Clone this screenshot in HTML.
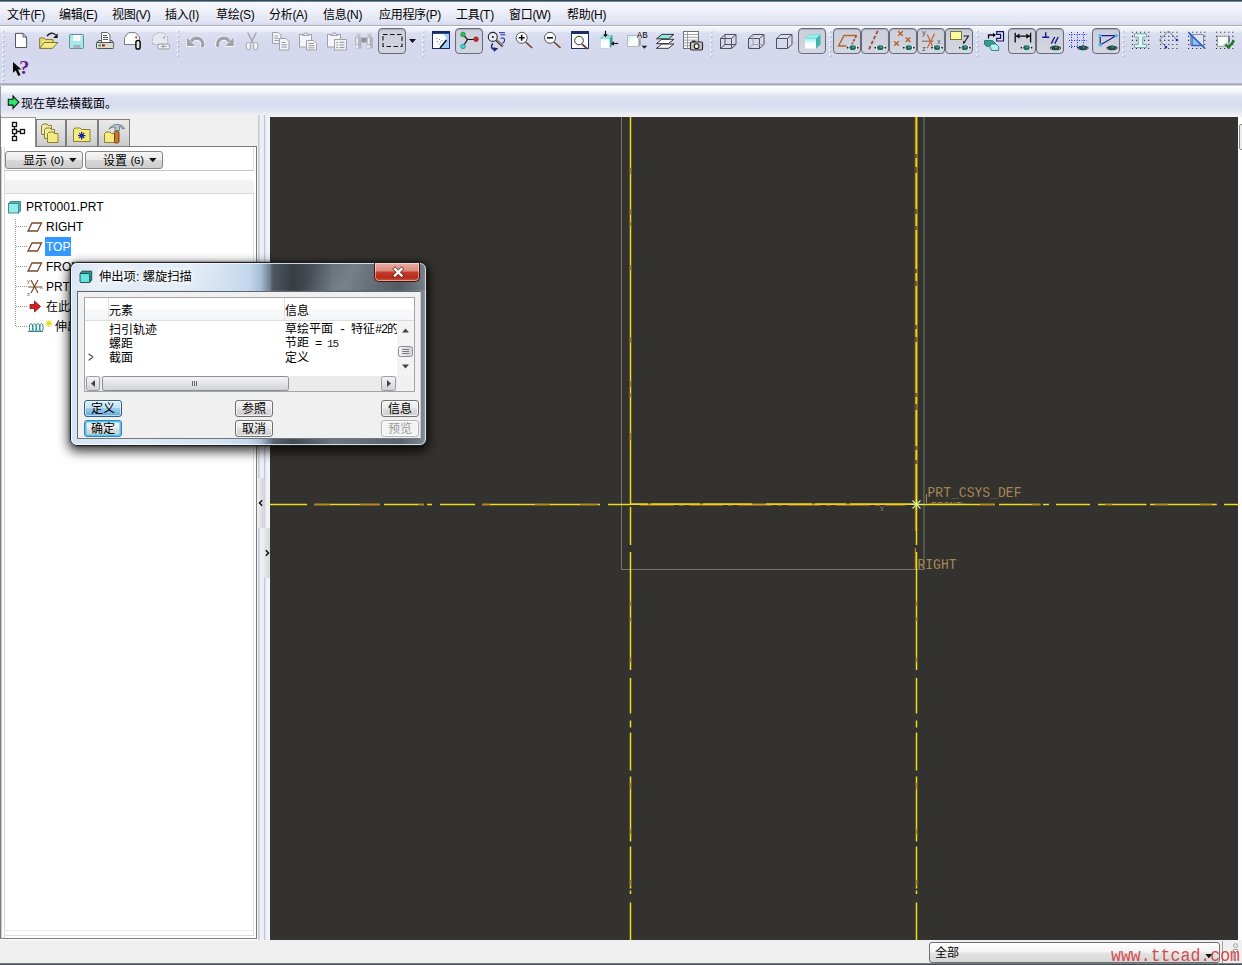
<!DOCTYPE html>
<html lang="zh-CN">
<head>
<meta charset="utf-8">
<title>Pro/ENGINEER</title>
<style>
html,body{margin:0;padding:0;}
body{width:1242px;height:965px;position:relative;overflow:hidden;background:#f0f0f0;
 font-family:"Liberation Sans","Noto Sans CJK SC",sans-serif;font-size:12px;color:#000;}
.abs{position:absolute;}
svg{position:absolute;overflow:visible;}
#topline{left:0;top:0;width:1242px;height:2px;background:linear-gradient(#2b4c5e 0,#2b4c5e 50%,#b9c6d2 100%);}
#menubar{left:0;top:2px;width:1242px;height:23px;background:linear-gradient(#f7f8fd 0%,#eef0f9 40%,#e0e3f2 85%,#d6d9ea 100%);}
#menubar span{position:absolute;top:4.700px;font-size:12px;line-height:16px;white-space:nowrap;letter-spacing:-.3px;}
#menusep{left:0;top:25px;width:1242px;height:2px;background:linear-gradient(#aeb1bd 0,#aeb1bd 50%,#fbfbfe 50%,#fbfbfe 100%);}
#toolbar{left:0;top:27px;width:1242px;height:57px;background:linear-gradient(#f4f5fb 0%,#eaecf7 7%,#dcdff1 11%,#d6d9ee 30%,#d4d8ed 60%,#d9dcef 100%);}
#tbline{left:0;top:83px;width:1242px;height:3px;background:linear-gradient(#c4c7d6 0%,#a1a5b5 40%,#a6aab9 60%,#f0f1f8 100%);}
#msgarea{left:0;top:86px;width:1242px;height:29px;background:linear-gradient(#fdfdff 0%,#f5f6fc 20%,#e3e6f4 30%,#dadef0 45%,#d8dcef 65%,#e0e3f3 85%,#eaecf5 95%,#f0f0f0 100%);}
#msgarea span{position:absolute;left:21px;top:9.500px;font-size:12px;line-height:16px;white-space:nowrap;}
#left{left:0;top:117px;width:258px;height:823px;background:#f0f0f0;}
#split{left:257px;top:115px;width:13px;height:825px;background:linear-gradient(90deg,#f0f0f0 0,#f0f0f0 1px,#c9cdd6 1.500px,#c9cdd6 2.300px,#eff2f7 3px,#e9edf4 6.500px,#bfc7d2 7px,#bfc7d2 8px,#ecf0f6 8.700px,#f2f5f9 13px);}
#canvas{left:270px;top:117px;width:968px;height:823px;background:#33322e;overflow:hidden;}
#rightedge{left:1238px;top:117px;width:4px;height:823px;background:#fdfdfd;}
#status{left:0;top:940px;width:1242px;height:23px;background:#f0f0f0;}
#botline{left:0;top:963px;width:1242px;height:2px;background:linear-gradient(#8a949c,#2e3a44);}
/* toolbar pressed buttons */
.tbtn{position:absolute;top:28px;height:24px;width:26px;border:1px solid #686b79;border-radius:4px;background:linear-gradient(#cdd0db,#d0d3de 60%,#d4d7e1);box-shadow:inset 0 1px 1px rgba(90,95,115,.3);}
/* left panel */
.tab{position:absolute;top:119px;height:27px;border:1px solid #7e7e7e;border-bottom:none;background:linear-gradient(#eaeaea,#dcdcdc 50%,#cbcbcb);box-sizing:border-box;}
.pbtn{position:absolute;top:151px;height:18px;box-sizing:border-box;border:1px solid #868686;border-radius:3px;background:linear-gradient(#f6f6f6 0%,#e9e9e9 48%,#d8d8d8 52%,#cdcdcd 100%);font-size:12px;line-height:16px;white-space:nowrap;}
.tree{position:absolute;font-size:12px;line-height:16px;white-space:nowrap;}
/* dialog */
.dbtn{position:absolute;box-sizing:border-box;width:37px;height:17px;border:1px solid #707070;border-radius:3px;background:linear-gradient(#f4f4f4 0%,#ebebeb 48%,#dddddd 52%,#cfcfcf 100%);font-size:12px;line-height:16px;text-align:center;white-space:nowrap;box-shadow:inset 0 0 0 1px rgba(255,255,255,.7);}
.dbtn.hot{border-color:#3c7fb1;background:linear-gradient(#eaf6fd 0%,#d9f0fc 48%,#bee6fd 52%,#a7d9f5 100%);box-shadow:inset 0 0 0 1px #48d8fb88;}
.dbtn.dis{color:#9a9a9a;border-color:#b5b5b5;background:#f4f4f4;}
.lt{position:absolute;font-size:12px;line-height:14px;white-space:nowrap;}
</style>
</head>
<body>
<div id="topline" class="abs"></div>
<div id="menubar" class="abs">
<span style="left:7px">文件(F)</span>
<span style="left:59px">编辑(E)</span>
<span style="left:112px">视图(V)</span>
<span style="left:165px">插入(I)</span>
<span style="left:216px">草绘(S)</span>
<span style="left:269px">分析(A)</span>
<span style="left:323px">信息(N)</span>
<span style="left:379px">应用程序(P)</span>
<span style="left:456px">工具(T)</span>
<span style="left:509px">窗口(W)</span>
<span style="left:567px">帮助(H)</span>
</div>
<div id="menusep" class="abs"></div>
<div id="toolbar" class="abs"></div>
<div id="tbline" class="abs"></div>
<div id="msgarea" class="abs"><span>现在草绘横截面。</span></div>
<div id="left" class="abs"></div>
<div id="split" class="abs"></div>
<div id="canvas" class="abs"></div>
<div id="rightedge" class="abs"></div>
<div id="status" class="abs"></div>
<div id="botline" class="abs"></div>
<!-- pressed toolbar buttons -->
<div class="tbtn" style="left:378px"></div>
<div class="tbtn" style="left:455px"></div>
<div class="tbtn" style="left:798px"></div>
<div class="tbtn" style="left:833.2px;width:25.400px"></div>
<div class="tbtn" style="left:861.2px;width:25.400px"></div>
<div class="tbtn" style="left:889.2px;width:25.400px"></div>
<div class="tbtn" style="left:917.2px;width:25.400px"></div>
<div class="tbtn" style="left:945.2px;width:25.400px"></div>
<div class="tbtn" style="left:1008.2px;width:25.400px"></div>
<div class="tbtn" style="left:1036.2px;width:25.400px"></div>
<div class="tbtn" style="left:1092px"></div>
<svg id="tbicons" style="left:0;top:0" width="1242" height="117" viewBox="0 0 1242 117">
<defs>
 <g id="eye"><ellipse cx="0" cy="0" rx="5.400" ry="1.900" fill="#fff"/><circle cx="-5" cy="0" r=".9" fill="#111"/><circle cx="5" cy="0" r=".9" fill="#111"/><ellipse cx="0" cy="0" rx="3.300" ry="2.400" fill="#1f6a60"/><ellipse cx=".6" cy="-.5" rx="1.300" ry=".9" fill="#4a9a8c"/></g>
 <g id="eyed"><ellipse cx="0" cy="0" rx="5.600" ry="2.100" fill="#111"/><circle cx="-4" cy=".2" r=".7" fill="#fff"/><circle cx="4" cy=".2" r=".7" fill="#fff"/><ellipse cx="0" cy="0" rx="3.300" ry="2.400" fill="#1c4f48"/><ellipse cx=".6" cy="-.5" rx="1.300" ry=".9" fill="#3a8a7c"/></g>
 <g id="sep"><rect x="0" y="1.0" width="1.6" height="1.6" fill="#fff"/><rect x="1.2" y="2.2" width="1.3" height="1.3" fill="#a4a8bc"/><rect x="0" y="5.8" width="1.6" height="1.6" fill="#fff"/><rect x="1.2" y="7.0" width="1.3" height="1.3" fill="#a4a8bc"/><rect x="0" y="10.7" width="1.6" height="1.6" fill="#fff"/><rect x="1.2" y="11.9" width="1.3" height="1.3" fill="#a4a8bc"/><rect x="0" y="15.5" width="1.6" height="1.6" fill="#fff"/><rect x="1.2" y="16.8" width="1.3" height="1.3" fill="#a4a8bc"/><rect x="0" y="20.4" width="1.6" height="1.6" fill="#fff"/><rect x="1.2" y="21.6" width="1.3" height="1.3" fill="#a4a8bc"/><rect x="0" y="25.2" width="1.6" height="1.6" fill="#fff"/><rect x="1.2" y="26.4" width="1.3" height="1.3" fill="#a4a8bc"/></g>
 <linearGradient id="cubeg2" x1="0" y1="0" x2="0" y2="1"><stop offset="0" stop-color="#e8fbfa"/><stop offset=".5" stop-color="#fff"/></linearGradient><linearGradient id="cubeg3" x1="0" y1="0" x2="1" y2="1"><stop offset="0" stop-color="#bff3ef"/><stop offset=".5" stop-color="#fbfdfd"/></linearGradient>
 <linearGradient id="chk" x1="0" y1="0" x2="1" y2="1"><stop offset="0" stop-color="#fff"/><stop offset=".6" stop-color="#f4f8f6"/><stop offset="1" stop-color="#a8c4bc"/></linearGradient>
 <linearGradient id="cubeg" x1="0" y1="0" x2="0" y2="1"><stop offset="0" stop-color="#9ff0ec"/><stop offset=".6" stop-color="#fff"/></linearGradient>
</defs>
<!-- grips / separators -->
<rect x="2" y="30.0" width="1.6" height="1.6" fill="#fff"/><rect x="3.2" y="31.2" width="1.3" height="1.3" fill="#a4a8bc"/><rect x="2" y="34.9" width="1.6" height="1.6" fill="#fff"/><rect x="3.2" y="36.1" width="1.3" height="1.3" fill="#a4a8bc"/><rect x="2" y="39.7" width="1.6" height="1.6" fill="#fff"/><rect x="3.2" y="40.9" width="1.3" height="1.3" fill="#a4a8bc"/><rect x="2" y="44.5" width="1.6" height="1.6" fill="#fff"/><rect x="3.2" y="45.8" width="1.3" height="1.3" fill="#a4a8bc"/><rect x="2" y="49.4" width="1.6" height="1.6" fill="#fff"/><rect x="3.2" y="50.6" width="1.3" height="1.3" fill="#a4a8bc"/><rect x="2" y="54.2" width="1.6" height="1.6" fill="#fff"/><rect x="3.2" y="55.5" width="1.3" height="1.3" fill="#a4a8bc"/><rect x="2" y="59.1" width="1.6" height="1.6" fill="#fff"/><rect x="3.2" y="60.3" width="1.3" height="1.3" fill="#a4a8bc"/><rect x="2" y="63.9" width="1.6" height="1.6" fill="#fff"/><rect x="3.2" y="65.1" width="1.3" height="1.3" fill="#a4a8bc"/><rect x="2" y="68.8" width="1.6" height="1.6" fill="#fff"/><rect x="3.2" y="70.0" width="1.3" height="1.3" fill="#a4a8bc"/><rect x="2" y="73.7" width="1.6" height="1.6" fill="#fff"/><rect x="3.2" y="74.9" width="1.3" height="1.3" fill="#a4a8bc"/><rect x="2" y="78.5" width="1.6" height="1.6" fill="#fff"/><rect x="3.2" y="79.7" width="1.3" height="1.3" fill="#a4a8bc"/>
<use href="#sep" x="176.7" y="29"/><use href="#sep" x="422" y="29"/><use href="#sep" x="710" y="29"/>
<use href="#sep" x="829" y="29"/><use href="#sep" x="976" y="29"/><use href="#sep" x="1122" y="29"/>
<!-- new -->
<path d="M15.500 33.400h7.500l3.600 3.600v10.500h-11.100z" fill="#fff" stroke="#55565e"/><path d="M23 33.400v3.600h3.600" fill="none" stroke="#55565e"/>
<!-- open -->
<path d="M39.700 48.300v-10.300h4.300l1.400 1.600h7.600v2.700" fill="#f1e06e" stroke="#7d7438"/>
<path d="M39.700 48.400l4.400-5.900h13.800l-5.400 5.900z" fill="#f6e884" stroke="#7d7438"/>
<path d="M47 36q4-5 8.500-1.200" fill="none" stroke="#111" stroke-width="1.400"/><path d="M57.600 33.300v4.600h-4.400z" fill="#111"/>
<!-- save -->
<rect x="69.500" y="34.500" width="14" height="14" rx="1.200" fill="#a4e9ec" stroke="#5b8f9c"/>
<rect x="73.200" y="35" width="7.300" height="6" fill="#fdf6f6"/><rect x="73.500" y="45" width="7" height="3.200" fill="#a9b4ba"/>
<!-- print -->
<path d="M101.500 42.500v-10h6l2.500 2.500v7.500z" fill="#fff" stroke="#666"/><path d="M103 35.500h4M103 37.500h5M103 39.500h5" stroke="#444" stroke-width=".9"/>
<path d="M96.500 43l2-2.500h2.500M110 40.500h2l1.500 2.500" fill="none" stroke="#555"/>
<rect x="96.500" y="42.500" width="17" height="6" rx=".8" fill="#dedbd0" stroke="#50525a"/><path d="M113.500 43v5.500" stroke="#7a7c80" stroke-width="1.200"/>
<rect x="98.500" y="44.300" width="2.500" height="2.200" fill="#3aa845"/><rect x="102" y="44.300" width="2.800" height="2.200" fill="#a81818"/>
<!-- mail w clip -->
<path d="M124.500 44.500v-7l4-4.800h7l4 4.300v7.500z" fill="#fff" stroke="#777980"/><rect x="135.300" y="36.500" width="1.800" height="1.800" fill="#b03030"/>
<rect x="135.900" y="40.500" width="4.200" height="8.600" rx="2.100" fill="#fff" stroke="#0a0a0a" stroke-width="1.500"/><path d="M138 43v4" stroke="#bbb" stroke-width=".8"/>
<!-- mail grey -->
<path d="M152.500 44.500v-7l4-4.800h7l4 4.300v7.500z" fill="#e6e8f2" stroke="#b2b4be" stroke-dasharray="2.500 1"/><rect x="163.300" y="36.500" width="1.800" height="1.800" fill="#9a9ca8"/>
<rect x="158" y="44" width="6.500" height="5" rx="2.300" fill="#fdfdfd" stroke="#b0b2ba" stroke-width="1.300"/><rect x="163" y="44" width="6.500" height="5" rx="2.300" fill="#fdfdfd" stroke="#b0b2ba" stroke-width="1.300"/><path d="M160.500 46.500h6.500" stroke="#a4a6ae" stroke-width="1.400"/>
<!-- undo/redo -->
<g id="redo"><path d="M218.300 47.200A5.600 5.600 0 1 1 229.300 41.500" fill="none" stroke="#fff" stroke-width="4.600"/><path d="M224.500 46.700h9.800v-9.500z" fill="#fff"/><path d="M218.300 47A5.600 5.600 0 1 1 229.300 41.500" fill="none" stroke="#9fa0a8" stroke-width="3.300"/><path d="M225.500 46h8.200v-8.200z" fill="#9fa0a8"/></g>
<use href="#redo" transform="translate(420.500 0) scale(-1 1)"/>
<!-- scissors -->
<path d="M247.700 32.500l5.300 10.500M256.300 32.500l-5.300 10.500" stroke="#a3a4ab" stroke-width="1.400"/><rect x="246.300" y="42.500" width="4" height="7.300" rx="1.800" fill="#f2f3f8" stroke="#a3a4ab"/><rect x="253.700" y="42.500" width="4" height="7.300" rx="1.800" fill="#f2f3f8" stroke="#a3a4ab"/>
<!-- copy -->
<g fill="#f4f4f9" stroke="#a0a1a9"><path d="M272.500 32.500h6l2.500 2.500v8.500h-8.500z"/><path d="M279.500 38.500h6.500l3 3v8.500h-9.500z"/></g>
<path d="M274.300 36h3.500M274.300 38.300h4.500M274.300 40.600h4.500M281.500 42.500h4M281.500 44.800h5.500M281.500 47.100h5.500" stroke="#8d8e96" stroke-width=".9"/>
<!-- paste -->
<g fill="#f4f4f9" stroke="#a0a1a9"><rect x="299.500" y="34.500" width="12" height="12.500"/><path d="M302.500 35.500q3.300-5.500 6.600 0z" fill="#e4e5ec"/><path d="M306.500 40.500h7l3 3v6.500h-10z"/></g>
<path d="M308.500 43.500h5.500M308.500 45.700h6M308.500 47.900h6" stroke="#8d8e96" stroke-width=".9"/>
<!-- paste special -->
<g fill="#f4f4f9" stroke="#a0a1a9"><rect x="327.500" y="34.500" width="13" height="12.500"/><path d="M331 35.500q3.300-5.500 6.600 0z" fill="#e4e5ec"/><rect x="334.500" y="39.500" width="12" height="10.500"/></g>
<path d="M336.300 42.300h1.800M339.500 42.300h5M336.300 45h1.800M339.500 45h5M336.300 47.600h1.800M339.500 47.600h5" stroke="#8d8e96" stroke-width="1"/>
<!-- binoculars -->
<g stroke="none"><rect x="355" y="37" width="6.500" height="11.500" fill="#b4b5bd"/><rect x="366.500" y="37" width="6.500" height="11.500" fill="#b4b5bd"/><rect x="356.500" y="33.500" width="4" height="4" fill="#c4c5cc"/><rect x="367.500" y="33.500" width="4" height="4" fill="#c4c5cc"/><rect x="361.500" y="37.500" width="5" height="5" fill="#8f9098"/>
<rect x="356.300" y="38" width="1.600" height="6" fill="#f4f5fa"/><rect x="367.800" y="38" width="1.600" height="6" fill="#f4f5fa"/><rect x="355.500" y="45" width="2.800" height="3" fill="#e9eaf0"/><rect x="367" y="45" width="2.800" height="3" fill="#e9eaf0"/><rect x="362.500" y="35" width="3" height="2.500" fill="#d8d9e0"/></g>
<!-- select -->
<rect x="383" y="34.500" width="19" height="12" fill="none" stroke="#111" stroke-width="1.100" stroke-dasharray="4.500 2.500"/>
<path d="M409 39h7l-3.500 4z" fill="#111"/>
<!-- sketch orient -->
<rect x="432.500" y="31.500" width="17" height="17" fill="#a6cef4" stroke="#16296a"/><rect x="432" y="31" width="18" height="2.800" fill="#16296a"/>
<path d="M433 34h10.500l3 4.500l-6.500 9.500h-7z" fill="#fff"/><path d="M436.500 38.500h1M439 39.500h1M437 41.500h1M440 42h1M438.500 44h1M441.500 40.500h1" stroke="#4a7fd0" stroke-width="1"/><path d="M446.500 40l-6.500 8" stroke="#0a1030" stroke-width="1.500"/>
<!-- nodes -->
<path d="M463 34.500l4.500 5l-4.500 7M467.500 39.500h8" fill="none" stroke="#111" stroke-width="1.200"/>
<circle cx="463" cy="34.500" r="2.300" fill="#2ec23a" stroke="#185" stroke-width=".7"/><circle cx="463" cy="46.500" r="2.300" fill="#39d3dc" stroke="#188" stroke-width=".7"/><circle cx="476" cy="39.200" r="2.300" fill="#d2222a" stroke="#811" stroke-width=".7"/>
<!-- repaint -->
<circle cx="492.800" cy="36.900" r="4.500" fill="#e9ebf5" stroke="#26272e" stroke-width="1.100"/><circle cx="492.800" cy="36.900" r="1" fill="#111"/>
<path d="M496.300 40.200l6.500 6.200" stroke="#4a3c34" stroke-width="2.400"/><path d="M496.800 40.200l6 5.800" stroke="#c9b28c" stroke-width=".9"/>
<path d="M499 32.700h6M500.500 34.800h4.800" stroke="#1a2f9a" stroke-width="1"/><path d="M500.500 38.300q4.500-1.200 4 2.500q-.5 2-2.200 2.400" fill="none" stroke="#1a2f9a" stroke-width="1.100"/>
<path d="M492.700 43.500q-3.400 4.500 2 6.300" fill="none" stroke="#16266f" stroke-width="1.500"/><path d="M493.800 52l4.500-3.400l-4.800-1.400z" fill="#16266f"/>
<!-- zoom in -->
<circle cx="521.700" cy="37.800" r="5.500" fill="#fff" stroke="#555"/><path d="M518.700 37.800h6M521.700 34.800v6" stroke="#111" stroke-width="1.600"/><path d="M525.700 42l6.500 6" stroke="#6b4638" stroke-width="1.700"/>
<!-- zoom out -->
<circle cx="550" cy="37.800" r="5.500" fill="#fff" stroke="#555"/><path d="M547 37.800h6" stroke="#111" stroke-width="1.600"/><path d="M554 42l6.500 6" stroke="#6b4638" stroke-width="1.700"/>
<!-- zoom fit -->
<rect x="571.500" y="31.500" width="17" height="17" fill="#fff" stroke="#1a2f66"/><rect x="571" y="31" width="18" height="3" fill="#1a2f66"/>
<circle cx="579" cy="40.500" r="4.300" fill="#fff" stroke="#333"/><path d="M582 44l5.500 5" stroke="#6b4638" stroke-width="1.700"/>
<!-- cube arrows -->
<path d="M600.200 38.600l2.800-3.100h9.500l-2.700 3.100z" fill="#8fe8e2" stroke="#5cb0aa" stroke-width=".6"/><path d="M609.800 38.600l2.700-3.100v9.500l-2.700 3.200z" fill="#3c9c94"/><rect x="600.200" y="38.600" width="9.600" height="9.600" fill="url(#cubeg2)" stroke="#9cc" stroke-width=".5"/>
<path d="M605.500 30.800v5" stroke="#111" stroke-width="1.200"/><path d="M603.300 34.300h4.400l-2.200 2.900z" fill="#111"/><path d="M618.200 43.500h-5" stroke="#111" stroke-width="1.200"/><path d="M614 41.300v4.400l-3-2.200z" fill="#111"/>
<!-- cube AB -->
<path d="M627.500 35.500h11.300v11h-11.300z" fill="url(#cubeg3)" stroke="#a8aab4" stroke-width=".8"/><path d="M638.800 38.500h2v7l-2 1z" fill="#9aa4a8"/>
<text x="636.800" y="37.700" font-family="'Liberation Mono',monospace" font-size="8.300" fill="#0a0a0a" textLength="10.800" lengthAdjust="spacingAndGlyphs">AB</text>
<path d="M641.600 45.800h5.600l-2.800 3z" fill="#1a1a22"/>
<!-- layers -->
<g stroke="#1c1c22" stroke-width=".9"><path d="M656.500 48.300l5.300-4.300h12l-5.300 4.300z" fill="#fff"/><path d="M656.500 43.600l5.300-4.300h12l-5.300 4.300z" fill="#fff"/><path d="M656.500 38.800l5.300-4.400h12l-5.300 4.400z" fill="#8fe8e2"/></g>
<!-- table camera -->
<rect x="683.500" y="31.500" width="15" height="17" fill="#fff" stroke="#6c6e76"/><path d="M683.500 34.500h15M683.500 37.300h15M683.500 40.100h15M683.500 42.900h15M683.500 45.700h15M687.500 31.500v17" stroke="#8a8c94" stroke-width=".8"/>
<rect x="690.500" y="42" width="12" height="8" rx="1.200" fill="#c9c9c9" stroke="#2a2a2e" stroke-width="1.200"/><circle cx="696.600" cy="46.200" r="2.400" fill="#f4f4f4" stroke="#1a1a1e" stroke-width="1.100"/><rect x="692" y="40.600" width="3.500" height="1.600" fill="#2a2a2e"/>
<!-- cubes -->
<g fill="none" stroke="#4f5058" stroke-width="1"><path d="M720.500 38.500h11v10h-11zM720.500 38.500l4.500-4h11l-4.500 4M736 34.500v10l-4.500 4M725 34.500v10h11M725 44.500l-4.500 4"/></g>
<g fill="none" stroke="#4f5058" stroke-width="1"><path d="M748.500 38.500h11v10h-11zM748.500 38.500l4.500-4h11l-4.500 4M764 34.500v10l-4.500 4"/><path d="M753 34.500v10h11M753 44.500l-4.500 4" stroke="#9fa1ad"/></g>
<g fill="none" stroke="#4f5058" stroke-width="1"><path d="M776.500 38.500h11v10h-11zM776.500 38.500l4.500-4h11l-4.500 4M792 34.500v10l-4.500 4"/></g>
<!-- shaded cube -->
<path d="M805 38.500l4.500-4h11v10l-4.500 4z" fill="#3fb5ae"/><path d="M805 38.500l4.500-4h11l-4.500 4z" fill="#8ff0ea"/><rect x="805" y="38.500" width="11" height="10" fill="url(#cubeg)"/>
<!-- datum plane -->
<path d="M846.500 46h-8l5.500-10.500h12.500" fill="none" stroke="#b4662a" stroke-width="1.400"/><path d="M856.500 35.500l-4.500 8.500" stroke="#a03c28" stroke-width="1.600" stroke-dasharray="2.600 1.400"/><use href="#eye" x="852.700" y="47.700"/>
<!-- axis -->
<path d="M877.700 30.800l-9.400 20" stroke="#a04a38" stroke-width="1.800" stroke-dasharray="3.600 2"/><use href="#eye" x="880.300" y="47.700"/>
<!-- points -->
<path d="M898.200 31.200l4.600 4.600M902.800 31.200l-4.600 4.600M894.200 41.200l4.600 4.600M898.800 41.200l-4.600 4.600M905.800 37.500l4.600 4.600M910.400 37.500l-4.600 4.600" stroke="#b8602a" stroke-width="1.400"/><use href="#eye" x="908.800" y="47.700"/>
<!-- csys -->
<path d="M922 41.200h11.500" stroke="#8a6a5a" stroke-width="1.100"/><path d="M927.300 34.500l5.500 12.500M934.700 33.500l-7.500 14.800" stroke="#c4683a" stroke-width="1.300"/>
<g font-family="'Liberation Sans',sans-serif" font-size="7.500" fill="#4c506c"><text x="922" y="35">y</text><text x="937" y="44">x</text><text x="922" y="50.500">z</text></g><use href="#eye" x="937" y="47.700"/>
<!-- yellow rect -->
<rect x="950.500" y="31.500" width="11" height="8" fill="#fdfa9e" stroke="#77783c"/><path d="M963.500 36h5l-4.600 7" fill="none" stroke="#15151a" stroke-width="1.100"/><path d="M962.800 44l.6-3.200l2.200 1.600z" fill="#15151a"/><use href="#eye" x="964.800" y="47.700"/>
<!-- import icon -->
<path d="M988.500 38.500v-3.500h5" fill="none" stroke="#0a0a0a" stroke-width="1.300"/><path d="M993 32.800l3 2.200l-3 2.200z" fill="#0a0a0a"/>
<path d="M996.700 31.700h6.800v9.300h-6.800v-2.700h3.900v-4h-3.900z" fill="#e4e4f6" stroke="#14145e" stroke-width="1.200"/>
<path d="M984.500 44.500v-4h8l3.500 3.500v2.500h-9z" fill="#2f9e90" stroke="#1d6f66" stroke-width=".8"/><path d="M989.700 46.200l2-2.200h4.300l2.700 2.700v3.800h-7.200z" fill="#b2f2ec" stroke="#2a8078" stroke-width=".9"/>
<!-- dimension -->
<path d="M1015.200 32.800v9.700M1030.600 32.800v9.700M1016 36.200h14" stroke="#0a0a0a" stroke-width="1.300"/><path d="M1015.800 36.200l3.700-2.600v5.200zM1030 36.200l-3.700-2.600v5.200z" fill="#0a0a0a"/><use href="#eye" x="1026.500" y="47.700"/>
<!-- constraints -->
<path d="M1042.200 37.300h7M1045.700 32.200v5" stroke="#1a1a90" stroke-width="1.400"/><path d="M1054.700 37l-3.400 6.600M1058.200 37l-3.400 6.600" stroke="#1a1a90" stroke-width="1.400"/><use href="#eyed" x="1055.500" y="47.900"/>
<!-- grid -->
<path d="M1069 34.500h18M1069 40.500h18M1069 46.500h18" stroke="#2236c4" stroke-width="1" stroke-dasharray="1 1.500"/>
<path d="M1071.500 32v17M1077.500 32v17M1083.500 32v17" stroke="#2236c4" stroke-width="1" stroke-dasharray="1 1.500"/><use href="#eyed" x="1083" y="47.900"/>
<!-- vertex -->
<path d="M1100.200 35.700h16l-16 9.200z" fill="none" stroke="#1a1a90" stroke-width="1.200"/><rect x="1098.700" y="34.200" width="3" height="3" fill="#35c4f4"/><rect x="1114.700" y="34.200" width="3" height="3" fill="#35c4f4"/><rect x="1098.700" y="43.500" width="3" height="3" fill="#35c4f4"/><use href="#eyed" x="1112" y="47.900"/>
<!-- I beam -->
<path d="M1131.95 31.75h1.1v1.1h-1.1zM1131.95 35.80h1.1v1.1h-1.1zM1131.95 39.85h1.1v1.1h-1.1zM1131.95 43.90h1.1v1.1h-1.1zM1131.95 47.95h1.1v1.1h-1.1zM1136.00 31.75h1.1v1.1h-1.1zM1136.00 35.80h1.1v1.1h-1.1zM1136.00 39.85h1.1v1.1h-1.1zM1136.00 43.90h1.1v1.1h-1.1zM1136.00 47.95h1.1v1.1h-1.1zM1140.05 31.75h1.1v1.1h-1.1zM1140.05 35.80h1.1v1.1h-1.1zM1140.05 39.85h1.1v1.1h-1.1zM1140.05 43.90h1.1v1.1h-1.1zM1140.05 47.95h1.1v1.1h-1.1zM1144.10 31.75h1.1v1.1h-1.1zM1144.10 35.80h1.1v1.1h-1.1zM1144.10 39.85h1.1v1.1h-1.1zM1144.10 43.90h1.1v1.1h-1.1zM1144.10 47.95h1.1v1.1h-1.1zM1148.15 31.75h1.1v1.1h-1.1zM1148.15 35.80h1.1v1.1h-1.1zM1148.15 39.85h1.1v1.1h-1.1zM1148.15 43.90h1.1v1.1h-1.1zM1148.15 47.95h1.1v1.1h-1.1z" fill="#2a2c38"/>
<path d="M1134.500 33.800h12v3.200h-3.800v7.400h3.800v3.200h-12v-3.200h3.800v-7.400h-3.800z" fill="#d9fbf7" stroke="#7d9a9c" stroke-width=".9"/>
<!-- diamond -->
<path d="M1160.15 31.75h1.1v1.1h-1.1zM1160.15 35.80h1.1v1.1h-1.1zM1160.15 39.85h1.1v1.1h-1.1zM1160.15 43.90h1.1v1.1h-1.1zM1160.15 47.95h1.1v1.1h-1.1zM1164.20 31.75h1.1v1.1h-1.1zM1164.20 35.80h1.1v1.1h-1.1zM1164.20 39.85h1.1v1.1h-1.1zM1164.20 43.90h1.1v1.1h-1.1zM1164.20 47.95h1.1v1.1h-1.1zM1168.25 31.75h1.1v1.1h-1.1zM1168.25 35.80h1.1v1.1h-1.1zM1168.25 39.85h1.1v1.1h-1.1zM1168.25 43.90h1.1v1.1h-1.1zM1168.25 47.95h1.1v1.1h-1.1zM1172.30 31.75h1.1v1.1h-1.1zM1172.30 35.80h1.1v1.1h-1.1zM1172.30 39.85h1.1v1.1h-1.1zM1172.30 43.90h1.1v1.1h-1.1zM1172.30 47.95h1.1v1.1h-1.1zM1176.35 31.75h1.1v1.1h-1.1zM1176.35 35.80h1.1v1.1h-1.1zM1176.35 39.85h1.1v1.1h-1.1zM1176.35 43.90h1.1v1.1h-1.1zM1176.35 47.95h1.1v1.1h-1.1z" fill="#2a2c38"/>
<path d="M1166 47.200l-6.500-7.200l9-9l8.500 9" fill="none" stroke="#6a6e78" stroke-width=".9"/>
<rect x="1175.800" y="38.900" width="2.300" height="2.300" fill="#163c9c"/><rect x="1164.800" y="46" width="2.300" height="2.300" fill="#163c9c"/>
<!-- crossed -->
<path d="M1188.05 31.75h1.1v1.1h-1.1zM1188.05 35.80h1.1v1.1h-1.1zM1188.05 39.85h1.1v1.1h-1.1zM1188.05 43.90h1.1v1.1h-1.1zM1188.05 47.95h1.1v1.1h-1.1zM1192.10 31.75h1.1v1.1h-1.1zM1192.10 35.80h1.1v1.1h-1.1zM1192.10 39.85h1.1v1.1h-1.1zM1192.10 43.90h1.1v1.1h-1.1zM1192.10 47.95h1.1v1.1h-1.1zM1196.15 31.75h1.1v1.1h-1.1zM1196.15 35.80h1.1v1.1h-1.1zM1196.15 39.85h1.1v1.1h-1.1zM1196.15 43.90h1.1v1.1h-1.1zM1196.15 47.95h1.1v1.1h-1.1zM1200.20 31.75h1.1v1.1h-1.1zM1200.20 35.80h1.1v1.1h-1.1zM1200.20 39.85h1.1v1.1h-1.1zM1200.20 43.90h1.1v1.1h-1.1zM1200.20 47.95h1.1v1.1h-1.1zM1204.25 31.75h1.1v1.1h-1.1zM1204.25 35.80h1.1v1.1h-1.1zM1204.25 39.85h1.1v1.1h-1.1zM1204.25 43.90h1.1v1.1h-1.1zM1204.25 47.95h1.1v1.1h-1.1z" fill="#2a2c38"/>
<rect x="1190.500" y="34.500" width="13" height="11" fill="#dfe3f3" stroke="#8a93a8" stroke-width="1"/><path d="M1192 36.500v8.500h9z" fill="#9fc0ea"/><path d="M1192 36v9.500h9.500" fill="none" stroke="#2a66c4" stroke-width="1.300"/><path d="M1188.700 32.600l16 15.600" stroke="#2a66c4" stroke-width="1.700"/>
<!-- check -->
<path d="M1216.05 31.75h1.1v1.1h-1.1zM1216.05 35.80h1.1v1.1h-1.1zM1216.05 39.85h1.1v1.1h-1.1zM1216.05 43.90h1.1v1.1h-1.1zM1216.05 47.95h1.1v1.1h-1.1zM1220.10 31.75h1.1v1.1h-1.1zM1220.10 35.80h1.1v1.1h-1.1zM1220.10 39.85h1.1v1.1h-1.1zM1220.10 43.90h1.1v1.1h-1.1zM1220.10 47.95h1.1v1.1h-1.1zM1224.15 31.75h1.1v1.1h-1.1zM1224.15 35.80h1.1v1.1h-1.1zM1224.15 39.85h1.1v1.1h-1.1zM1224.15 43.90h1.1v1.1h-1.1zM1224.15 47.95h1.1v1.1h-1.1zM1228.20 31.75h1.1v1.1h-1.1zM1228.20 35.80h1.1v1.1h-1.1zM1228.20 39.85h1.1v1.1h-1.1zM1228.20 43.90h1.1v1.1h-1.1zM1228.20 47.95h1.1v1.1h-1.1zM1232.25 31.75h1.1v1.1h-1.1zM1232.25 35.80h1.1v1.1h-1.1zM1232.25 39.85h1.1v1.1h-1.1zM1232.25 43.90h1.1v1.1h-1.1zM1232.25 47.95h1.1v1.1h-1.1z" fill="#2a2c38"/>
<rect x="1217.500" y="36.300" width="11.300" height="10" fill="url(#chk)" stroke="#8a9a98" stroke-width=".9"/><path d="M1229 36.500v6" stroke="#4a6a68" stroke-width="1.400"/>
<path d="M1225.300 44.200l3.200 3.300l5.700-7" fill="none" stroke="#187a20" stroke-width="2.300"/>
<!-- cursor ? -->
<path d="M13 62v10.800l2.700-2.400l2.600 5.600l2.200-1l-2.600-5.500h3.600z" fill="#0a0a0a"/>
<text x="19.300" y="73.800" font-family="'Liberation Serif',serif" font-weight="bold" font-size="18.500" fill="#6a1a7e" textLength="10" lengthAdjust="spacingAndGlyphs">?</text>
<!-- message arrow -->
<path d="M8.300 99.300h4.700v-3.300l5.900 6.200l-5.900 6.200v-3.300h-4.700z" fill="#2fe36e" stroke="#0a1a0a" stroke-width="1.100"/>
<rect x="0" y="86" width="1" height="29" fill="#9a9ca4"/>
</svg>
<!-- left panel -->
<div class="abs" style="left:0;top:115px;width:1px;height:824px;background:#7c7c7c"></div>
<div class="abs" style="left:0;top:939px;width:258px;height:1px;background:#fdfdfd"></div>
<div class="abs" style="left:1px;top:146px;width:256px;height:793px;box-sizing:border-box;border:1px solid #7c7c7c;border-left-color:#c8c8c8;border-right:none;background:#fff"></div>
<div class="abs" style="left:4px;top:930px;width:250px;height:6px;border-top:1px solid #ececec;border-bottom:1px solid #dedede;box-sizing:border-box"></div>
<div class="abs" style="left:253px;top:147px;width:1px;height:789px;background:#e2e2e2"></div>
<div class="abs" style="left:4px;top:147px;width:1px;height:791px;background:#d8d8d8"></div>
<div class="tab" style="left:35.500px;width:30.800px"></div>
<div class="tab" style="left:66px;width:32.200px"></div>
<div class="tab" style="left:97.900px;width:32px"></div>
<div class="abs" style="left:1px;top:117px;width:35px;height:30px;background:#fff;border-top:1px solid #9a9a9a;border-right:1px solid #8e8e8e;box-sizing:border-box"></div>
<div class="pbtn" style="left:5px;width:78px"><span style="position:absolute;left:17px;top:1px">显示</span><span style="position:absolute;left:43.500px;top:1px;font-family:'Liberation Mono','Noto Sans CJK SC',monospace;font-size:10.500px;letter-spacing:-1.700px">(O)</span></div>
<div class="pbtn" style="left:85px;width:78px"><span style="position:absolute;left:17px;top:1px">设置</span><span style="position:absolute;left:43.500px;top:1px;font-family:'Liberation Mono','Noto Sans CJK SC',monospace;font-size:10.500px;letter-spacing:-1.700px">(G)</span></div>
<div class="abs" style="left:5px;top:170px;width:249px;height:24px;box-sizing:border-box;border-top:1px solid #c4c4c4;border-bottom:1px solid #d9d9d9;background:linear-gradient(#ffffff 0%,#fcfcfc 40%,#f3f3f3 46%,#f1f1f1 100%)"></div>
<div class="tree" style="left:26px;top:199px">PRT0001.PRT</div>
<div class="tree" style="left:46px;top:219px">RIGHT</div>
<div class="abs" style="left:45px;top:237px;width:26px;height:19px;background:#3399ff"></div>
<div class="tree" style="left:46px;top:239px;color:#fff">TOP</div>
<div class="tree" style="left:46px;top:259px">FRONT</div>
<div class="tree" style="left:46px;top:279px">PRT_CSYS_DEF</div>
<div class="tree" style="left:46px;top:299px">在此插入</div>
<div class="tree" style="left:55px;top:319px">伸出项</div>
<svg style="left:0;top:117px" width="258" height="240" viewBox="0 117 258 240">
<!-- tab icons -->
<g fill="#fff" stroke="#111" stroke-width="1.300"><path d="M14.500 126.500v10M16.500 131.500h4" fill="none"/><rect x="12.500" y="122.500" width="4" height="4"/><rect x="12.500" y="129.500" width="4" height="4"/><rect x="12.500" y="136.500" width="4" height="4"/><rect x="20.500" y="129.500" width="4" height="4"/></g>
<g fill="#f4ea7e" stroke="#8a8238" stroke-width="1"><path d="M41.500 134.500v-9l1.500-1.500h4l1.500 1.500h3v9z" fill="#f0e9a8"/><path d="M44.500 138.500v-9l1.500-1.500h4l1.500 1.500h3v9z" fill="#f0e9a8"/><path d="M47.500 142.500v-9l1.500-1.500h4l1.500 1.500h3.500v9z"/></g>
<g fill="#f4ea7e" stroke="#8a8238" stroke-width="1"><path d="M73.500 141.500v-12l1.500-1.500h5l1.500 1.500h8.500v12z"/></g>
<path d="M81.700 132v7.400M78 135.700h7.400M79.200 133.200l5 5M84.200 133.200l-5 5" stroke="#14209a" stroke-width="1.200"/>
<g fill="#f4ea7e" stroke="#8a8238" stroke-width="1"><path d="M104.500 142.500v-9l1.500-1.500h4l1.500 1.500h3.500v9z"/></g>
<rect x="114.500" y="131" width="4.500" height="12" rx="1.500" fill="#c9782a" stroke="#7a4416"/><path d="M109 129q3-5 9-4.500q5 0 6.500 4l-2 .5q-1-2.500-3-2.500v4h-4.500v-3.500q-3-.5-6 2z" fill="#b8c4d0" stroke="#5f6f80" stroke-width=".8"/>
<!-- dropdown arrows -->
<path d="M69 158h7.500l-3.700 4.300z" fill="#111"/><path d="M149 158h7.500l-3.700 4.300z" fill="#111"/>
<!-- tree lines -->
<path d="M15.500 219v108" stroke="#9a9a9a" stroke-dasharray="1 1"/>
<path d="M16 226.500h11M16 246.500h11M16 266.500h11M16 286.500h11M16 306.500h11M16 326.500h11" stroke="#9a9a9a" stroke-dasharray="1 1"/>
<!-- root cube -->
<path d="M8.500 203.500l2-2h10v9.500l-2 2z" fill="#3fb9b4" stroke="#4a8a8a"/><rect x="8.500" y="203.500" width="10" height="9.500" fill="#8fecea" stroke="#4a8a8a"/>
<!-- planes -->
<g fill="#fff" stroke="#7a4a2c" stroke-width="1.300"><path d="M28 231l4-8h9.500l-4 8z"/><path d="M28 251l4-8h9.500l-4 8z"/><path d="M28 271l4-8h9.500l-4 8z"/></g>
<!-- csys -->
<path d="M28 287h13M31 280l7 13M38 280l-7 13" stroke="#7a4a2c" stroke-width="1.200"/>
<text x="27" y="283" font-size="6" fill="#556">y</text><text x="40" y="289" font-size="6" fill="#556">x</text><text x="27" y="296" font-size="6" fill="#556">z</text>
<!-- insert arrow -->
<path d="M30 304.500h4.500v-3.500l6 5.500l-6 5.500v-3.500h-4.500z" fill="#d81e1e" stroke="#7a1010" stroke-width=".8"/>
<!-- helix -->
<g fill="none" stroke="#2a8a8a" stroke-width="1"><ellipse cx="31" cy="327.500" rx="1.700" ry="4"/><ellipse cx="34.500" cy="327.500" rx="1.700" ry="4"/><ellipse cx="38" cy="327.500" rx="1.700" ry="4"/><ellipse cx="41.500" cy="327.500" rx="1.700" ry="4"/><path d="M28 331.500h15"/></g>
<path d="M49 320v7M45.500 323.500h7M46.500 321l5 5M51.500 321l-5 5" stroke="#e8dc20" stroke-width="1.100"/>
</svg>
<!-- splitter sash buttons -->
<div class="abs" style="left:255.500px;top:146px;width:1px;height:793px;background:#7c7c7c"></div>
<div class="abs" style="left:257.500px;top:478px;width:7px;height:50px;background:linear-gradient(90deg,#eeeef1,#dcdde2 55%,#cfd1d7)"></div>
<div class="abs" style="left:264px;top:528px;width:6px;height:50px;background:linear-gradient(90deg,#e6e7ea,#d6d8dd)"></div>
<svg style="left:256px;top:490px" width="14" height="80" viewBox="256 490 14 80"><path d="M262.200 500.300l-2.700 2.700l2.700 2.700" fill="none" stroke="#111" stroke-width="1.500"/><path d="M265.800 550.300l2.700 2.700l-2.700 2.700" fill="none" stroke="#111" stroke-width="1.500"/></svg>
<svg id="cv" style="left:270px;top:117px" width="968" height="823" viewBox="270 117 968 823">
<!-- grey sketch window -->
<path d="M621.500 117v452.500h302.500v-452.500" fill="none" stroke="#77776f" stroke-width="1"/>
<!-- horizontal -->
<path d="M270 504.5H307M314 504.5H380M384 504.5H424M427 504.5H432M440 504.5H475M482 504.5H600M608 504.5H631" stroke="#ecdc1c" stroke-width="1.500"/>
<path d="M314 504.5H330M360 504.5H380M418 504.5H424M482 504.5H490M535 504.5H550M580 504.5H598" stroke="#b06a1f" stroke-width="1.500" opacity=".75"/>
<path d="M917 504.5H995M999 504.5H1040.5M1043 504.5H1049M1056 504.5H1090M1098 504.5H1146.5M1150 504.5H1216.8M1224 504.5H1238" stroke="#ecdc1c" stroke-width="1.500"/>
<path d="M980 504.5H995M1032 504.5H1040M1105 504.5H1112M1155 504.5H1168M1200 504.5H1212" stroke="#b06a1f" stroke-width="1.500" opacity=".75"/>
<!-- sketch-section horizontal between verticals -->
<path d="M630 504.200H917" stroke="#ecdc1c" stroke-width="1.700"/>
<path d="M640 505.400H905" stroke="#b06a1f" stroke-width="1" stroke-dasharray="34 5 5 5" opacity=".9"/>
<path d="M648 503.800h3M700 503.800h3M752 503.800h14M812 503.800h3M846 503.800h4" stroke="#4a4632" stroke-width="1"/>
<!-- left vertical -->
<path d="M630.500 117V505" stroke="#ecdc1c" stroke-width="1.500"/>
<path d="M630.5 168V174M630.5 209V215M630.5 222V226M630.5 265V270M630.5 337V343M630.5 381V387M630.5 393V397M630.5 433V440" stroke="#b06a1f" stroke-width="1.500" opacity=".85"/>
<path d="M630.5 507V545M630.5 552V670M630.5 678V713.5M630.5 720.5V727.5M630.5 732.5V770.5M630.5 776.5V841.5M630.5 846.5V888.5M630.5 890.5V894M630.5 902.5V940" stroke="#ecdc1c" stroke-width="1.500"/>
<path d="M630.5 601V606M630.5 617V621M630.5 657V662M630.5 783V789M630.5 829V834M630.5 880V886" stroke="#b06a1f" stroke-width="1.500" opacity=".8"/>
<!-- right vertical -->
<path d="M915.400 117V505" stroke="#c88a1f" stroke-width="1.200"/>
<path d="M916.700 117V505" stroke="#ecdc1c" stroke-width="1.500"/>
<path d="M916 154V158M916 167V173M916 209V214M916 226V230M916 269V273M916 281V286M916 325V329M916 337V342M916 393V397M916 404V410M916 446V450M916 460V464" stroke="#5a4424" stroke-width="2.400" opacity=".8"/>
<path d="M916.5 507V545M916.5 552V670M916.5 678V713.5M916.5 720.5V727.5M916.5 732.5V770.5M916.5 776.5V841.5M916.5 846.5V888.5M916.5 890.5V894M916.5 902.5V940" stroke="#ecdc1c" stroke-width="1.500"/>
<path d="M916.5 601V606M916.5 617V621M916.5 657V662M916.5 783V789M916.5 829V834M916.5 880V886" stroke="#b06a1f" stroke-width="1.500" opacity=".8"/>
<path d="M915.400 506V531M915.400 548V569" stroke="#c88a1f" stroke-width="1.100"/>
<!-- csys star -->
<path d="M911 504.500h11.500M916.500 499v11M912.500 500.500l8 8M920.500 500.500l-8 8" stroke="#d8f088" stroke-width="1.100"/>
<path d="M926.500 494v9" stroke="#a8874a" stroke-width="1"/>
<path d="M880 506l3 5M884 506l-3 5" stroke="#77776f" stroke-width=".8"/>
<g font-family="'Liberation Mono',monospace" fill="#c9a060" stroke="#33322e" stroke-width=".3">
<text x="927.500" y="497.300" font-size="15.500" textLength="94" lengthAdjust="spacingAndGlyphs">PRT_CSYS_DEF</text>
<text x="917.500" y="569.300" font-size="15.500" textLength="39" lengthAdjust="spacingAndGlyphs">RIGHT</text>
</g>
<g font-family="'Liberation Mono',monospace" fill="#a8874a"><text x="931" y="509" font-size="11" textLength="31" lengthAdjust="spacingAndGlyphs">FRONT</text></g>
<rect x="929" y="503.700" width="36" height="7" fill="#33322e"/>
<path d="M929 504.500H965" stroke="#ecdc1c" stroke-width="1.500"/>
</svg>
<!-- dialog -->
<div id="dlg" class="abs" style="left:70px;top:262px;width:357px;height:184px;box-sizing:border-box;border:1px solid #1d2126;border-radius:7px;box-shadow:0 4px 11px 2px rgba(0,0,0,.72),0 0 3px rgba(0,0,0,.55);
 background:linear-gradient(90deg,#d4e3f3 0px,#dfeaf6 60px,#d3e2f2 150px,#c3d7ed 178px,#a5bcd6 190px,#58626d 203px,#424950 222px,#6d7782 262px,#626b75 300px,#5a636c 330px,#7d8791 352px,#a9b1b9 357px);overflow:hidden">
 <div class="abs" style="left:0;top:0;right:0;bottom:0;border:1px solid rgba(255,255,255,.75);border-radius:6px"></div>
 <div class="abs" style="left:1px;top:1px;width:200px;height:26px;background:linear-gradient(115deg,rgba(255,255,255,.0) 0%,rgba(255,255,255,.45) 18%,rgba(255,255,255,.05) 34%,rgba(255,255,255,.35) 55%,rgba(255,255,255,0) 75%)"></div>
 <div class="abs" style="left:200px;top:1px;width:156px;height:26px;background:linear-gradient(115deg,rgba(0,0,0,.12) 0%,rgba(0,0,0,.18) 25%,rgba(255,255,255,.10) 50%,rgba(0,0,0,.08) 80%)"></div>
</div>
<!-- close button -->
<div class="abs" style="left:374px;top:263px;width:46px;height:19px;box-sizing:border-box;border:1px solid #4a1510;border-top:none;border-radius:0 0 5px 5px;background:linear-gradient(#e9b0a4 0%,#d98678 45%,#c43d2c 50%,#b62a1a 80%,#c95a40 100%);box-shadow:inset 0 0 0 1px rgba(255,255,255,.45)"></div>
<svg style="left:374px;top:263px" width="46" height="19" viewBox="0 0 46 19"><path d="M21 6l6.500 6.500M27.500 6l-6.500 6.500" stroke="#6a2a20" stroke-width="3.800" stroke-linecap="square"/><path d="M21 6l6.500 6.500M27.500 6l-6.500 6.500" stroke="#fff" stroke-width="2.400" stroke-linecap="square"/></svg>
<!-- title -->
<svg style="left:78px;top:268px" width="20" height="18" viewBox="78 268 20 18"><path d="M80 273.500l2-2.300h9.700v8.800l-2 2.500z" fill="#2a9c98" stroke="#1f3a3a" stroke-width=".9"/><rect x="80" y="273.500" width="9.700" height="9" rx="1" fill="#62e4e0" stroke="#1f3a3a" stroke-width=".9"/></svg>
<div class="abs" style="left:99px;top:269px;font-size:12.300px;line-height:17px;white-space:nowrap;color:#000;text-shadow:0 0 5px #fff,0 0 5px #fff,0 0 8px #fff">伸出项: 螺旋扫描</div>
<!-- client -->
<div class="abs" style="left:77px;top:291px;width:344px;height:148px;box-sizing:border-box;border:1px solid #5f676f;border-right-color:#c8cdd2;border-bottom-color:#6f767d;background:#f0f0f0"></div>
<!-- list -->
<div class="abs" style="left:84px;top:297px;width:331px;height:95px;box-sizing:border-box;border:1px solid #a5a5a5;background:#f0f0f0"></div>
<div class="abs" style="left:85px;top:298px;width:329px;height:22px;background:linear-gradient(#ffffff 0%,#ffffff 48%,#f8f9fa 55%,#f4f5f7 100%);border-bottom:1px solid #dcdcdc"></div>
<div class="abs" style="left:108px;top:298px;width:1px;height:22px;background:#e2e3e5"></div>
<div class="abs" style="left:284px;top:298px;width:1px;height:22px;background:#e2e3e5"></div>
<div class="abs" style="left:85px;top:321px;width:312px;height:55px;background:#fff"></div>
<div class="abs" style="left:397px;top:321px;width:17px;height:55px;background:#f3f3f3"></div>
<div class="lt" style="left:109px;top:304px">元素</div>
<div class="lt" style="left:285px;top:304px">信息</div>
<div class="lt" style="left:109px;top:323px">扫引轨迹</div>
<div class="lt" style="left:109px;top:337px">螺距</div>
<div class="lt" style="left:109px;top:351px">截面</div>
<div class="lt" style="left:87.500px;top:352px;font-family:'Liberation Mono',monospace;font-size:13px;color:#333;transform:scale(.7,1.150);transform-origin:0 50%">&gt;</div>
<div class="lt" style="left:285px;top:323px;width:112px;overflow:hidden;font-family:'Liberation Mono','Noto Sans CJK SC',monospace;font-size:12px;letter-spacing:-1.200px"><span style="letter-spacing:0">草绘平面</span> - <span style="letter-spacing:0">特征</span>#2<span style="letter-spacing:0">的截面</span></div>
<div class="lt" style="left:285px;top:337px;font-family:'Liberation Mono','Noto Sans CJK SC',monospace;font-size:12px;letter-spacing:-1.200px"><span style="letter-spacing:0">节距</span> = <span style="font-size:11px;letter-spacing:-1.200px;color:#222">15</span></div>
<div class="lt" style="left:285px;top:351px">定义</div>
<!-- scrollbars -->
<svg style="left:84px;top:297px" width="331" height="95" viewBox="84 297 331 95">
<defs><linearGradient id="sbh" x1="0" y1="0" x2="0" y2="1"><stop offset="0" stop-color="#f5f5f5"/><stop offset=".5" stop-color="#e4e4e6"/><stop offset="1" stop-color="#cfd0d4"/></linearGradient>
<linearGradient id="sbv" x1="0" y1="0" x2="1" y2="0"><stop offset="0" stop-color="#f5f5f5"/><stop offset=".5" stop-color="#e4e4e6"/><stop offset="1" stop-color="#cfd0d4"/></linearGradient></defs>
<path d="M402 332.500h7l-3.500-4z" fill="#444"/><path d="M402 364.500h7l-3.500 4z" fill="#444"/>
<rect x="398.500" y="346.500" width="14" height="10" rx="2" fill="url(#sbv)" stroke="#8c8f96"/><path d="M402 349.500h7M402 351.500h7M402 353.500h7" stroke="#6a6e78" stroke-width=".9"/>
<rect x="85" y="376" width="312" height="15" fill="#ebebec"/>
<rect x="86.500" y="376.500" width="13" height="14" rx="2" fill="url(#sbh)" stroke="#9a9da4"/><path d="M95 380v7l-4-3.500z" fill="#444"/>
<rect x="381.500" y="376.500" width="14" height="14" rx="2" fill="url(#sbh)" stroke="#9a9da4"/><path d="M387 380v7l4-3.500z" fill="#444"/>
<rect x="102.500" y="376.500" width="186" height="14" rx="2" fill="url(#sbh)" stroke="#8c8f96"/><path d="M192.500 381v5M194.500 381v5M196.500 381v5" stroke="#55585f" stroke-width=".9"/>
</svg>
<!-- buttons -->
<div class="dbtn" style="left:84px;top:400px;width:38px;border-color:#2c628b;background:linear-gradient(#dff0fa 0%,#c4e0f3 45%,#9fcdec 50%,#62aad9 100%);box-shadow:inset 0 0 0 1px rgba(255,255,255,.55)">定义</div>
<div class="dbtn" style="left:84px;top:420px;width:38px;border-color:#3c7fb1;box-shadow:inset 0 0 0 1.500px #45cbf2">确定</div>
<div class="dbtn" style="left:235px;top:400px;width:38px">参照</div>
<div class="dbtn" style="left:235px;top:420px;width:38px">取消</div>
<div class="dbtn" style="left:381px;top:400px;width:38px">信息</div>
<div class="dbtn dis" style="left:381px;top:420px;width:38px">预览</div>
<!-- status bar -->
<div class="abs" style="left:929px;top:942px;width:291px;height:21px;box-sizing:border-box;border:1px solid #6f6f6f;border-radius:3px;background:linear-gradient(#ffffff 0%,#f4f4f4 45%,#e3e3e3 55%,#d6d6d6 100%)"></div>
<div class="abs" style="left:935px;top:945px;font-size:12px;line-height:16px">全部</div>
<svg style="left:1100px;top:940px" width="142" height="25" viewBox="1100 940 142 25">
<path d="M1205.300 954h7.200l-3.600 4.200z" fill="#111"/>
<path d="M1222.500 941v22" stroke="#a0a0a0"/>
<circle cx="1235.500" cy="945.700" r="2" fill="none" stroke="#9a9a9a" stroke-width=".9"/><path d="M1233.200 949.500h4.600v10.500h-4.600z" fill="none" stroke="#a4a4a4" stroke-width=".9"/>
<text x="1111" y="960.500" font-family="'Liberation Mono',monospace" font-size="18" fill="#d23434" fill-opacity=".88" textLength="129" lengthAdjust="spacingAndGlyphs">www.ttcad.com</text>
</svg>
<!-- right edge scroll stub -->
<div class="abs" style="left:1238.500px;top:123.500px;width:5px;height:26px;border:1px solid #8a8a8a;border-radius:2px;background:#ececec;box-sizing:border-box"></div>
</body>
</html>
